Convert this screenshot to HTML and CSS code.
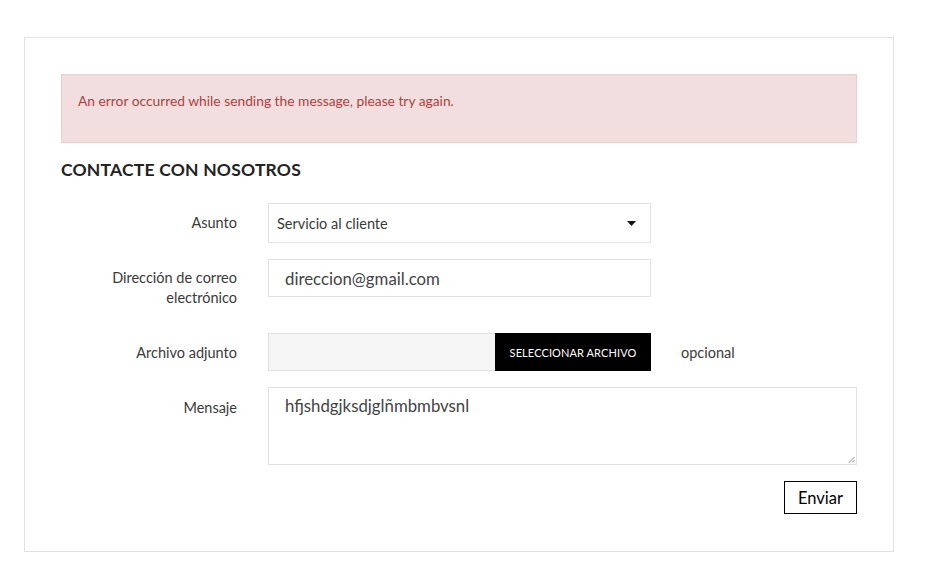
FILE: index.html
```html
<!DOCTYPE html>
<html lang="es">
<head>
<meta charset="utf-8">
<title>Contacte con nosotros</title>
<link rel="stylesheet" href="styles.css">
</head>
<body>
<section class="contact-box">
  <div class="alert">An error occurred while sending the message, please try again.</div>
  <h3 class="title">CONTACTE CON NOSOTROS</h3>
  <form class="form">
    <div class="row row-select">
      <label class="label">Asunto</label>
      <div class="field">
        <div class="select">
          <span>Servicio al cliente</span>
          <svg class="caret" width="9" height="5" viewBox="0 0 9 5"><path d="M0 0h9L4.5 5z" fill="#111"/></svg>
        </div>
      </div>
    </div>
    <div class="row row-email">
      <label class="label">Dirección de correo electrónico</label>
      <div class="field">
        <div class="input">direccion@gmail.com</div>
      </div>
    </div>
    <div class="row row-file">
      <label class="label">Archivo adjunto</label>
      <div class="field file-field">
        <div class="file">
          <div class="file-name"></div>
          <div class="file-btn">SELECCIONAR ARCHIVO</div>
        </div>
        <span class="optional">opcional</span>
      </div>
    </div>
    <div class="row row-msg">
      <label class="label">Mensaje</label>
      <div class="field">
        <div class="textarea">hfjshdgjksdjglñmbmbvsnl
          <svg class="grip" width="7" height="7" viewBox="0 0 7 7"><path d="M6.5 1L1 6.5M6.5 4L4 6.5" stroke="#888" stroke-width="1"/></svg>
        </div>
      </div>
    </div>
    <div class="actions">
      <button type="button" class="submit">Enviar</button>
    </div>
  </form>
</section>
</body>
</html>
```

FILE: styles.css
```css
* { box-sizing: border-box; }
html, body { margin: 0; padding: 0; background: #fff; }
body {
  font-family: "Lato", "Open Sans", sans-serif;
  color: #3a3a3a;
  padding: 37px 0 0 24px;
}
.contact-box {
  width: 870px;
  border: 1px solid #e1e1e1;
  padding: 36px 36px 37px;
}
.alert {
  background: #f2dede;
  border: 1px solid #ebccd1;
  color: #a94442;
  font-size: 13.8px;
  line-height: 20px;
  padding: 16px 16px 31px;
}
.title {
  margin: 16px 0 22px;
  font-size: 17.5px;
  line-height: 22px;
  font-weight: 700;
  color: #232323;
  letter-spacing: 0.2px;
}
.form { display: flex; flex-direction: column; }
.row {
  display: grid;
  grid-template-columns: 176px 1fr;
  column-gap: 31px;
  margin-bottom: 16px;
}
.label {
  text-align: right;
  font-size: 14.5px;
  line-height: 20px;
  color: #3a3a3a;
  padding-top: 10px;
}
.row-email .label { padding-top: 9px; padding-bottom: 9px; }
.row-file { margin-bottom: 16px; }
.row-msg { margin-bottom: 16px; }
.row-msg .label { padding-top: 11px; }
.select {
  width: 383px;
  height: 40px;
  border: 1px solid #e1e1e1;
  display: flex;
  align-items: center;
  justify-content: space-between;
  padding: 0 14px 0 8px;
  font-size: 14.5px;
  color: #3a3a3a;
}
.caret { margin-top: 1px; }
.input {
  width: 383px;
  height: 38px;
  border: 1px solid #e1e1e1;
  display: flex;
  align-items: center;
  padding: 0 16px;
  font-size: 16.8px;
  color: #444;
}
.file-field { display: flex; align-items: center; gap: 30px; }
.file { display: flex; width: 383px; height: 38px; }
.file-name {
  flex: 1;
  background: #f5f5f5;
  border: 1px solid #e1e1e1;
  border-right: none;
}
.file-btn {
  width: 156px;
  background: #000;
  color: #fff;
  font-size: 11px;
  display: flex;
  align-items: center;
  justify-content: center;
  letter-spacing: 0.1px;
}
.optional { font-size: 14.5px; color: #3a3a3a; }
.textarea {
  position: relative;
  width: 589px;
  height: 78px;
  border: 1px solid #e1e1e1;
  padding: 8px 16px;
  font-size: 16.8px;
  line-height: 20px;
  color: #444;
}
.grip { position: absolute; right: 1px; bottom: 1px; }
.actions { display: flex; justify-content: flex-end; }
.submit {
  font-family: inherit;
  height: 33px;
  width: 73px;
  background: #fff;
  border: 1px solid #000;
  font-size: 16.5px;
  color: #000;
  padding: 0;
}
```
